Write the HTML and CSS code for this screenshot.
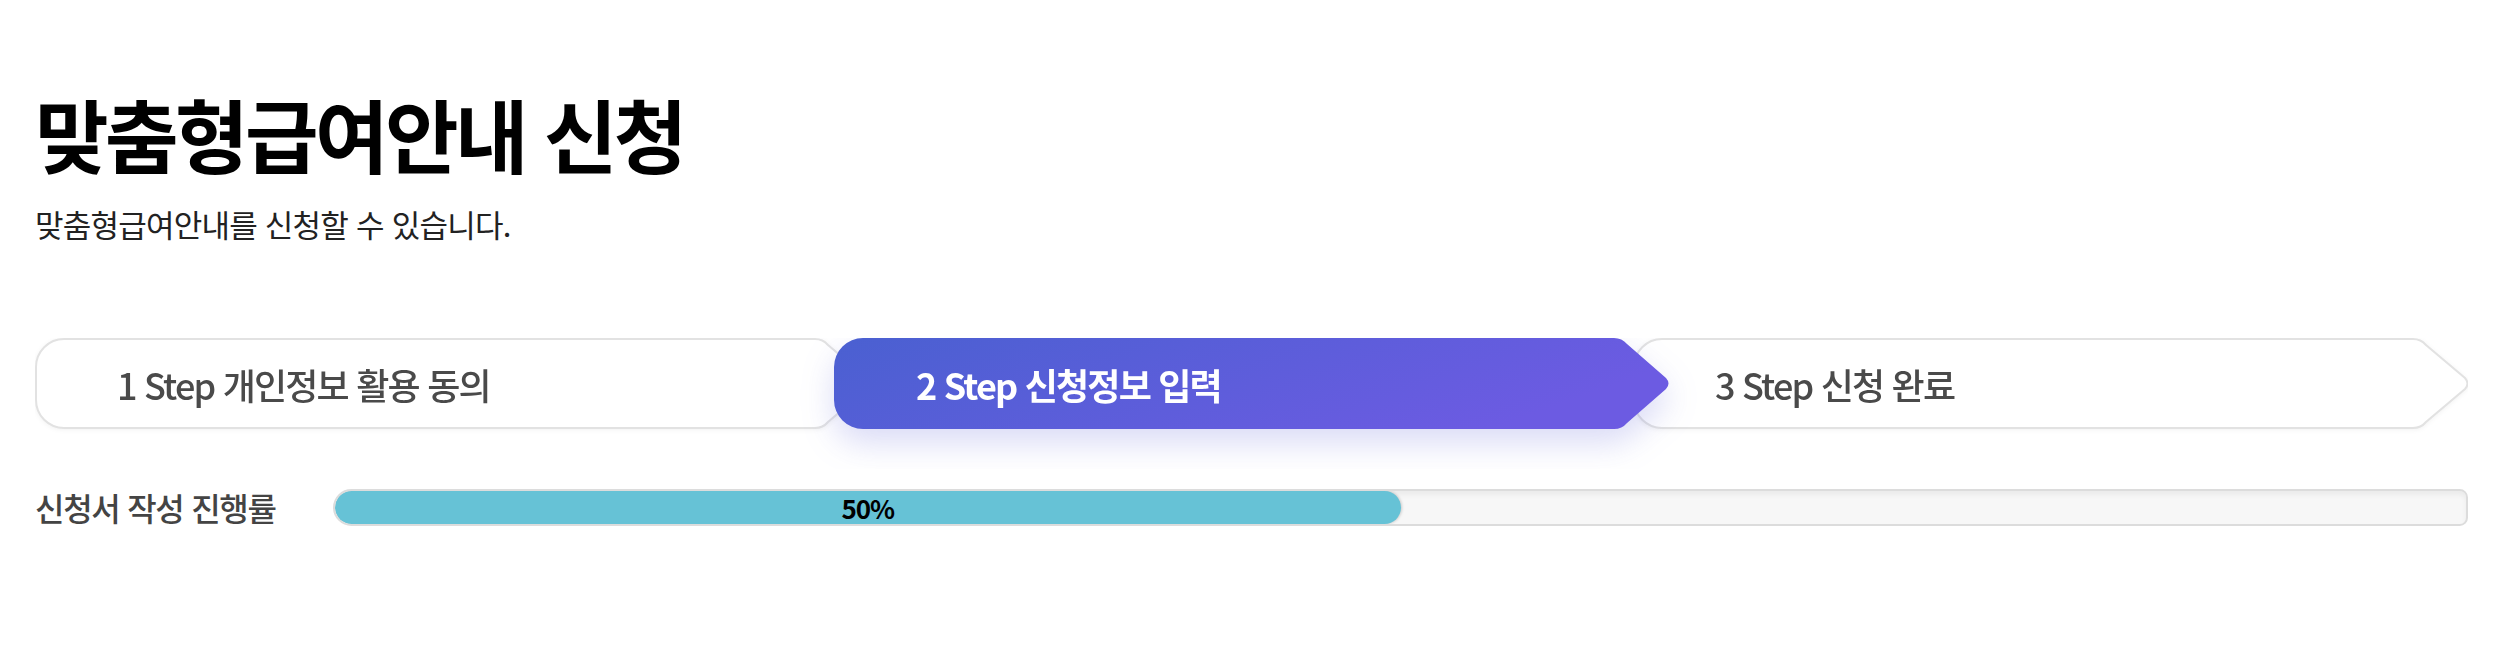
FILE: index.html
```html
<!DOCTYPE html>
<html lang="ko">
	<head>
		<meta charset="utf-8">
		<title>맞춤형급여안내 신청</title>
		<link rel="stylesheet" href="styles.css">
	</head>
	<body>
		<div class="wrap">
			<h1 class="page-title">맞춤형급여안내 신청</h1>
			<p class="page-desc">맞춤형급여안내를 신청할 수 있습니다.</p>

			<!-- steps -->
			<ol class="steps">
				<li class="step">
					<svg class="step-bg" width="839" height="91" viewBox="0 0 839 91">
						<path d="M29,1 H780 Q788,1 793,7 L832,40 Q837,45.5 832,51 L793,84 Q788,90 780,90 H29 A28,28 0 0 1 1,62 V29 A28,28 0 0 1 29,1 Z" fill="#fff" stroke="#e2e2e2" stroke-width="2"/>
					</svg>
					<span class="step-text">1 Step 개인정보 활용 동의</span>
				</li>
				<li class="step step-on">
					<svg class="step-bg" width="839" height="91" viewBox="0 0 839 91">
						<defs>
							<linearGradient id="stepGrad" x1="0" y1="0" x2="1" y2="0.3">
								<stop offset="0" stop-color="#4a60d1"/>
								<stop offset="1" stop-color="#6c5be2"/>
							</linearGradient>
						</defs>
						<path d="M29,0 H780 Q788,0 793,6 L832,40 Q837,45.5 832,51 L793,85 Q788,91 780,91 H29 A29,29 0 0 1 0,62 V29 A29,29 0 0 1 29,0 Z" fill="url(#stepGrad)"/>
					</svg>
					<span class="step-text">2 Step 신청정보 입력</span>
				</li>
				<li class="step">
					<svg class="step-bg" width="839" height="91" viewBox="0 0 839 91">
						<path d="M29,1 H780 Q788,1 793,7 L832,40 Q837,45.5 832,51 L793,84 Q788,90 780,90 H29 A28,28 0 0 1 1,62 V29 A28,28 0 0 1 29,1 Z" fill="#fff" stroke="#e2e2e2" stroke-width="2"/>
					</svg>
					<span class="step-text">3 Step 신청 완료</span>
				</li>
			</ol>

			<!-- progress -->
			<div class="progress-row">
				<div class="progress-label">신청서 작성 진행률</div>
				<div class="progress-track">
					<div class="progress-fill" style="width: 50%;">50%</div>
				</div>
			</div>
		</div>
	</body>
</html>
```

FILE: styles.css
```css
body {
	margin: 0;
	background: #fff;
	font-family: "Noto Sans CJK KR", "Noto Sans", sans-serif;
	color: #222;
}

.wrap {
	padding: 84px 30px 80px 35px;
	overflow: hidden;
}

.page-title {
	margin: 0;
	font-size: 80px;
	line-height: 1.2;
	font-weight: 700;
	letter-spacing: -0.045em;
	color: #000;
}

.page-desc {
	margin: 22px 0 0 0;
	font-size: 31px;
	line-height: 1.4;
	letter-spacing: -0.025em;
	color: #222;
}

.steps {
	display: flex;
	margin: 93px 0 0 0;
	padding: 0;
	list-style: none;
	overflow: hidden;
	padding-bottom: 40px;
	margin-bottom: -40px;
}

.step {
	position: relative;
	flex: 0 0 839px;
	height: 91px;
	margin-left: -40px;
	display: flex;
	align-items: center;
	padding-left: 82px;
	box-sizing: border-box;
	filter: drop-shadow(0 1px 2px rgba(0, 0, 0, 0.05));
}

.step:first-child {
	margin-left: 0;
}

.step-bg {
	position: absolute;
	left: 0;
	top: 0;
}

.step-text {
	position: relative;
	font-size: 36px;
	font-weight: 500;
	letter-spacing: -0.05em;
	color: #4a4a4a;
}

.step-on {
	z-index: 2;
	filter: drop-shadow(0 14px 16px rgba(86, 92, 214, 0.22));
}

.step-on .step-text {
	color: #fff;
	font-weight: 700;
}

.progress-row {
	display: flex;
	align-items: center;
	margin-top: 55px;
}

.progress-label {
	flex: 0 0 298px;
	font-size: 32px;
	font-weight: 500;
	letter-spacing: -0.04em;
	color: #444;
}

.progress-track {
	flex: 1;
	height: 37px;
	box-sizing: border-box;
	border: 2px solid #dcdcdc;
	border-radius: 20px 9px 9px 20px;
	background: #f7f7f7;
	box-shadow: inset 0 4px 5px rgba(0, 0, 0, 0.05);
	overflow: hidden;
}

.progress-fill {
	height: 100%;
	background: #66c2d6;
	border-radius: 18px;
	box-shadow: 1px 0 3px rgba(0, 0, 0, 0.18);
	text-align: center;
	font-size: 26px;
	font-weight: 700;
	line-height: 33px;
	letter-spacing: -0.04em;
	color: #000;
}
```
